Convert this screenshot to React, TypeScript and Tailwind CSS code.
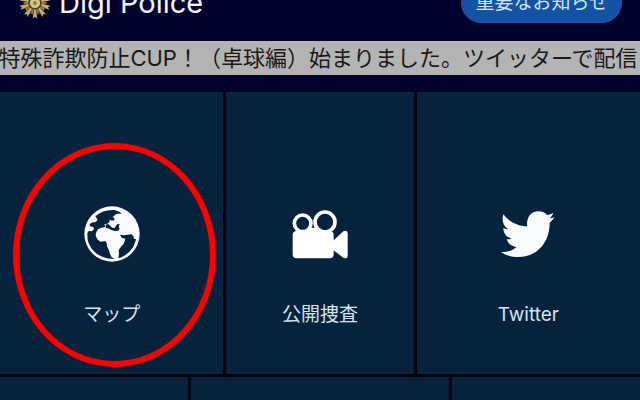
import type { ReactNode } from "react";

type Tile = {
  label: string;
  icon: ReactNode;
  marked?: boolean;
};

const RAYS = Array.from({ length: 20 }, (_, i) => i * 18);

function Emblem() {
  return (
    <svg viewBox="-50 -50 100 100" className="size-8 shrink-0" aria-hidden="true">
      {RAYS.map((deg, i) => (
        <path
          key={deg}
          d={i % 2 ? "M-3 -18L-4 -38L0 -34L4 -38L3 -18Z" : "M-3 -18L-7 -49L0 -43L7 -49L3 -18Z"}
          fill={i % 2 ? "#8f7a48" : "#c8b06c"}
          transform={`rotate(${deg})`}
        />
      ))}
      <circle r="21" fill="#4d402f" />
      <circle r="16" fill="#d8c583" />
      <circle r="6" fill="#8f773f" />
    </svg>
  );
}

function GlobeIcon() {
  return (
    <svg viewBox="40 31 168 168" className="size-14" aria-hidden="true">
      <circle cx="124" cy="115" r="83" fill="#f8fcff" />
      {/* Atlantic and the northern seas */}
      <path
        d="M74 62C91 47 111 41 132 43L148 49L152 54L139 54L132 59L125 65L130 69L124 74L117 72L116 80L107 86L101 86L104 94L92 96L82 101L76 111L75 120L80 131L89 138L104 136L108 142L109 152L115 164L118 175L123 185L132 189C92 192 59 167 51 132L50 113L54 106L63 107L70 101L68 95L58 91L57 85L66 80L74 80L81 73L78 68Z"
        fill="#07223c"
      />
      {/* Mediterranean */}
      <path
        d="M105 89L111 84L119 90L124 96L132 97L136 90L141 85L147 86L144 94L147 98L143 105L132 106L122 103L112 98L106 97Z"
        fill="#07223c"
      />
      <path d="M121 69L129 65L132 70L128 75L121 74Z" fill="#07223c" />
      {/* Indian Ocean */}
      <path
        d="M148 117L161 119L182 116L188 121L190 129L196 131C191 158 170 180 143 188L145 176L144 164L151 153L159 144L164 129L153 126Z"
        fill="#07223c"
      />
    </svg>
  );
}

function CameraIcon() {
  return (
    <svg viewBox="36 31 168 168" className="size-14" fill="#ffffff" aria-hidden="true">
      <circle cx="68" cy="83" r="25" fill="none" stroke="#ffffff" strokeWidth="11" />
      <circle cx="135" cy="79" r="30" fill="none" stroke="#ffffff" strokeWidth="11" />
      <path d="M90 96L107 96L114 110L86 110Z" />
      <rect x="38" y="106" width="123" height="82" rx="12" />
      <path d="M158 137L190 107Q203 101 203 113V180Q203 192 190 186L158 162Z" />
    </svg>
  );
}

function BirdIcon() {
  return (
    <svg viewBox="31 31 168 168" className="size-14" fill="#f8fcff" aria-hidden="true">
      <path d="M41 56C58 78 82 91 113 92C109 68 122 47 147 47C158 47 166 51 172 58C179 57 185 55 191 51C189 58 185 63 180 68C185 68 190 67 194 65C190 72 185 77 180 81C180 140 143 184 86 184C66 184 48 179 34 169C52 170 68 165 81 154C66 153 55 144 51 130C56 131 61 131 66 129C51 125 41 113 41 97C45 99 50 101 55 101C40 90 36 73 41 56Z" />
    </svg>
  );
}

const tiles: Tile[] = [
  { label: "マップ", icon: <GlobeIcon />, marked: true },
  { label: "公開捜査", icon: <CameraIcon /> },
  { label: "Twitter", icon: <BirdIcon /> },
];

export default function App() {
  return (
    <div className="flex min-h-screen flex-col overflow-hidden bg-[#02022f] font-['Inter','Noto_Sans_CJK_JP',sans-serif]">
      {/* the header is scrolled halfway out of view */}
      <header className="-mt-9 flex h-[77px] shrink-0 items-center pr-[18px] pl-[19px]">
        <Emblem />
        <h1 className="ml-2 text-[29px] leading-8 whitespace-nowrap text-[#f4f4fa]">Digi Police</h1>
        <button
          type="button"
          className="ml-auto h-10 rounded-full border border-[#2a4f94] bg-[#1453a3] px-[13px] text-[19px] leading-7 whitespace-nowrap text-[#cfe4fa]"
        >
          重要なお知らせ
        </button>
      </header>

      <p className="flex h-[34px] shrink-0 items-center justify-center bg-[#b4b4b5] pr-1 text-[22px] leading-8 whitespace-nowrap text-[#191919]">
        特殊詐欺防止CUP！（卓球編）始まりました。ツイッターで配信
      </p>

      <main className="mt-[17px] flex grow flex-col gap-[3px] bg-[#01010f]">
        <nav className="grid grid-cols-[223fr_187fr_223fr] gap-x-[3px]">
          {tiles.map((t) => (
            <div key={t.label} className="relative">
              <button
                type="button"
                className="flex w-full flex-col items-center border-y border-[#0e2538] bg-[#07223c] pt-[113px] pb-11"
              >
                {t.icon}
                <span className="mt-[39px] text-[19px] leading-7 text-[#d3e4f1]">{t.label}</span>
              </button>
              {t.marked && (
                <span
                  className="pointer-events-none absolute top-[51px] left-[13px] h-56 w-[203px] rounded-[50%] border-6 border-[#ff0000]"
                  aria-hidden="true"
                />
              )}
            </div>
          ))}
        </nav>

        <div className="grid grow grid-cols-[188fr_258fr_188fr] gap-x-[3px]">
          <div className="border-t border-[#0e2538] bg-[#07223c]" />
          <div className="border-t border-[#0e2538] bg-[#07223c]" />
          <div className="border-t border-[#0e2538] bg-[#07223c]" />
        </div>
      </main>
    </div>
  );
}
